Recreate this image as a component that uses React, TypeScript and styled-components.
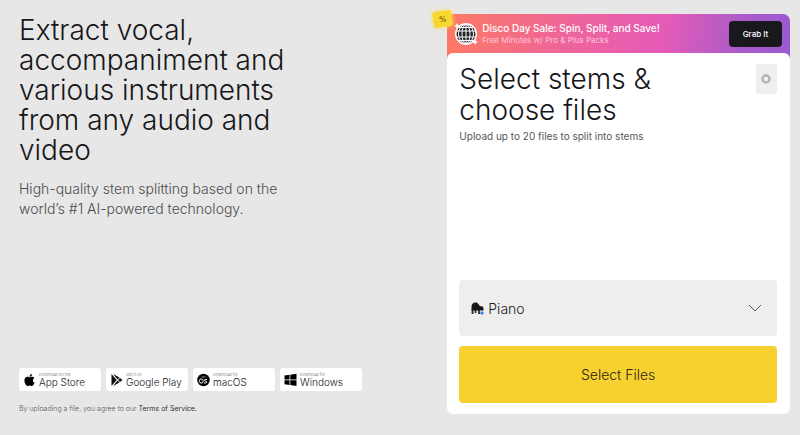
import React from 'react';
import styled, { createGlobalStyle } from 'styled-components';

const GlobalStyle = createGlobalStyle`
  *, *::before, *::after { box-sizing: border-box; }
  body {
    margin: 0;
    background: #e7e7e7;
    color: #17171b;
    font-family: Inter, "Liberation Sans", sans-serif;
    font-weight: 300;
  }
  h1, h2, p { margin: 0; font-weight: 300; }
  button, select { font: inherit; color: inherit; border: 0; cursor: pointer; }
  a { color: inherit; text-decoration: none; }
`;

const Page = styled.div`
  display: grid;
  grid-template-columns: minmax(0, 5fr) minmax(0, 4fr);
  min-height: 100vh;
  padding: 14px 10px 21px 19px;
`;

const Intro = styled.main`
  display: flex;
  flex-direction: column;
`;

const Title = styled.h1`
  max-width: 280px;
  margin-top: 1px;
  font-size: 28px;
  line-height: 30px;
`;

const Lead = styled.p`
  max-width: 280px;
  margin-top: 14px;
  color: #4c4c50;
  font-size: 14px;
  line-height: 20px;
`;

const Stores = styled.nav`
  display: flex;
  flex-wrap: wrap;
  gap: 5px;
  margin-top: auto;
`;

const StoreLink = styled.a`
  display: flex;
  align-items: center;
  gap: 3px;
  width: 82px;
  height: 23px;
  padding-left: 4px;
  border-radius: 3px;
  background: #fff;
  white-space: nowrap;

  svg { flex: none; width: 13px; height: 14px; }
`;

const StoreText = styled.span`
  display: flex;
  flex-direction: column;
  font-size: 10px;
  line-height: 11px;
`;

const StoreNote = styled.small`
  color: #66666a;
  font-size: 4px;
  line-height: 5px;
`;

const Legal = styled.p`
  margin-top: 13px;
  color: #5c5c60;
  font-size: 7px;
  line-height: 10px;

  a { color: #303034; font-weight: 400; }
`;

const Card = styled.section`
  position: relative;
  display: flex;
  flex-direction: column;
`;

const Banner = styled.aside`
  display: flex;
  align-items: center;
  gap: 4px;
  height: 46px;
  padding: 0 8px 7px 7px;
  border-radius: 7px 7px 0 0;
  background: linear-gradient(100deg, #fd7a62 0%, #ee659b 35%, #e65bb6 62%, #a95bca 86%, #985ad4 100%);
  color: #fff;
`;

const BannerText = styled.div`
  flex: 1;
  white-space: nowrap;
`;

const BannerTitle = styled.p`
  font-size: 10px;
  font-weight: 500;
  line-height: 13px;
`;

const BannerNote = styled.p`
  color: #ffc4dc;
  font-size: 8px;
  font-weight: 400;
  line-height: 11px;
`;

const GrabButton = styled.button`
  width: 53px;
  height: 26px;
  padding: 0;
  border-radius: 4px;
  background: #19181c;
  color: #fff;
  font-size: 8px;
  font-weight: 500;
`;

const Percent = styled.span`
  position: absolute;
  top: -3px;
  left: -14px;
  width: 19px;
  height: 16px;
  border-radius: 3px;
  background: #f9d62d;
  box-shadow: 0 0 5px #f9dc55;
  font-size: 8px;
  line-height: 16px;
  text-align: center;
  transform: rotate(-8deg);
`;

const Panel = styled.form`
  display: flex;
  flex: 1;
  flex-direction: column;
  margin-top: -7px;
  padding: 11px 13px 11px 12px;
  border-radius: 6px;
  background: #fff;
`;

const PanelHead = styled.header`
  display: flex;
  justify-content: space-between;
  align-items: flex-start;
`;

const PanelTitle = styled.h2`
  max-width: 220px;
  font-size: 28px;
  line-height: 31px;
`;

const PanelNote = styled.p`
  margin-top: 3px;
  color: #56565a;
  font-size: 10px;
  font-weight: 400;
  line-height: 14px;
`;

const SettingsButton = styled.button`
  display: grid;
  place-items: center;
  width: 21px;
  height: 30px;
  padding: 0;
  border-radius: 3px;
  background: #efefef;
`;

const StemField = styled.label`
  display: grid;
  grid-template-columns: 17px 1fr 14px;
  align-items: center;
  margin-top: auto;
  padding: 0 15px 0 12px;
  border-radius: 4px;
  background: #eee;

  svg { grid-row: 1; pointer-events: none; z-index: 1; }
  svg:first-child { grid-column: 1; }
  svg:last-child { grid-column: 3; }
`;

const StemSelect = styled.select`
  grid-row: 1;
  grid-column: 1 / -1;
  height: 56px;
  padding: 0 0 0 17px;
  appearance: none;
  background: transparent;
  font-size: 14px;
`;

const SelectFiles = styled.button`
  height: 57px;
  margin-top: 10px;
  border-radius: 4px;
  background: #f7d130;
  color: #2c260f;
  font-size: 14px;
`;

const AppleIcon = () => (
  <svg viewBox="0 0 384 512" aria-hidden="true">
    <path d="M319 269c0-37 17-64 50-85-19-27-47-42-84-45-35-3-74 21-88 21-15 0-49-20-76-20C65 141 6 185 6 273c0 26 5 53 14 81 13 36 58 126 105 124 25-1 42-18 75-18 31 0 48 18 76 18 47-1 88-82 100-119-64-30-57-88-57-90zM262 104c27-32 25-62 24-72-24 1-52 16-67 34-18 20-28 45-26 73 26 2 49-11 69-35z" />
  </svg>
);

const PlayIcon = () => (
  <svg viewBox="0 0 26 28" fill="#111" aria-hidden="true">
    <path d="M3 2v24l11-12z" />
    <path d="M6 2l9 11 4-4zM6 26l9-11 4 4zM20 10l5 4-5 4-4-4z" />
    <path d="M4 2l11 12L4 26" fill="none" stroke="#fff" strokeWidth="1.5" />
  </svg>
);

const MacIcon = () => (
  <svg viewBox="0 0 26 26" aria-hidden="true">
    <circle cx="13" cy="13" r="12.500" />
    <g fill="none" stroke="#fff" strokeWidth="2">
      <rect x="5" y="11" width="7" height="8" rx="3" />
      <path d="M20 12h-3c-3 0-3 3 0 3s3 4 0 4h-3" />
      <path d="M9 7h8" strokeWidth="1.5" opacity="0.7" />
    </g>
  </svg>
);

const WindowsIcon = () => (
  <svg viewBox="0 0 26 28" aria-hidden="true">
    <path d="M1 5l10-1.500V13H1zM12.500 3.300L25 1.500V13H12.500zM1 14.500h10V24L1 22.500zM12.500 14.500H25V26l-12.500-1.800z" />
  </svg>
);

const DiscoBall = () => (
  <svg width="24" height="24" viewBox="0 0 24 24" aria-hidden="true">
    <circle cx="12" cy="12" r="11" fill="#fff" />
    <circle cx="12" cy="12" r="9.500" fill="#202026" />
    <g fill="none" stroke="#fff" strokeWidth="1">
      <path d="M12 2v20M3 9h18M3 15h18M5 5.500h14M5 18.500h14" />
      <ellipse cx="12" cy="12" rx="4" ry="9.500" />
      <ellipse cx="12" cy="12" rx="7.500" ry="9.500" />
    </g>
    <path d="M3 1l1 2 2 1-2 1-1 2-1-2-2-1 2-1zM21 17l1 2 2 1-2 1-1 2-1-2-2-1 2-1z" fill="#fff" />
  </svg>
);

const PianoIcon = () => (
  <svg width="13" height="13" viewBox="0 0 26 26" aria-hidden="true">
    <path d="M1 10C1 4 4 1 9 1c6 0 6 5 9 7 3 1 7 0 7 5v4H1z" fill="#17171b" />
    <path d="M3 16v8M9 16v6M16 16v8" stroke="#25252b" strokeWidth="3.500" />
    <circle cx="22" cy="22" r="3.500" fill="#3987d5" />
  </svg>
);

const Chevron = () => (
  <svg width="14" height="9" viewBox="0 0 14 9" fill="none" stroke="#55555a" aria-hidden="true">
    <path d="M1 1l6 6 6-6" />
  </svg>
);

const stores = [
  { note: 'Download on the', name: 'App Store', Icon: AppleIcon },
  { note: 'Get it on', name: 'Google Play', Icon: PlayIcon },
  { note: 'Download for', name: 'macOS', Icon: MacIcon },
  { note: 'Download for', name: 'Windows', Icon: WindowsIcon },
];

export default function App() {
  return (
    <>
      <GlobalStyle />
      <Page>
        <Intro>
          <Title>Extract vocal, accompaniment and various instruments from any audio and video</Title>
          <Lead>High-quality stem splitting based on the world’s #1 AI-powered technology.</Lead>
          <Stores aria-label="Apps">
            {stores.map(({ note, name, Icon }) => (
              <StoreLink href="#" key={name}>
                <Icon />
                <StoreText>
                  <StoreNote>{note}</StoreNote>
                  {name}
                </StoreText>
              </StoreLink>
            ))}
          </Stores>
          <Legal>
            By uploading a file, you agree to our <a href="#">Terms of Service.</a>
          </Legal>
        </Intro>
        <Card>
          <Banner>
            <DiscoBall />
            <BannerText>
              <BannerTitle>Disco Day Sale: Spin, Split, and Save!</BannerTitle>
              <BannerNote>Free Minutes w/ Pro &amp; Plus Packs</BannerNote>
            </BannerText>
            <GrabButton type="button">Grab It</GrabButton>
          </Banner>
          <Percent>%</Percent>
          <Panel onSubmit={(event) => event.preventDefault()}>
            <PanelHead>
              <PanelTitle>Select stems &amp; choose files</PanelTitle>
              <SettingsButton type="button" aria-label="Settings">
                <svg width="10" height="10" viewBox="0 0 10 10" aria-hidden="true">
                  <circle cx="5" cy="5" r="3.500" fill="#f4f4f4" stroke="#b4b4b4" strokeWidth="2.500" />
                </svg>
              </SettingsButton>
            </PanelHead>
            <PanelNote>Upload up to 20 files to split into stems</PanelNote>
            <StemField>
              <PianoIcon />
              <StemSelect aria-label="Stem" defaultValue="Piano">
                <option>Piano</option>
              </StemSelect>
              <Chevron />
            </StemField>
            <SelectFiles type="button">Select Files</SelectFiles>
          </Panel>
        </Card>
      </Page>
    </>
  );
}
